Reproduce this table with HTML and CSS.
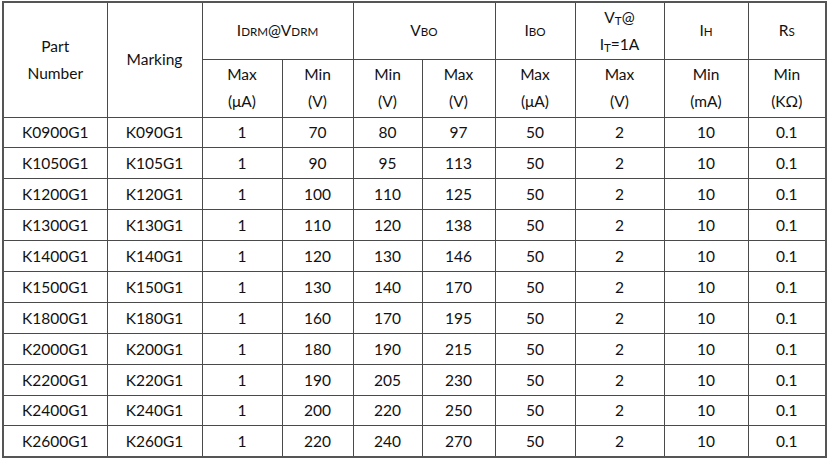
FILE: index.html
```html
<!DOCTYPE html>
<html>
<head>
<meta charset="utf-8">
<link rel="stylesheet" href="styles.css">
</head>
<body>
<table class="spec">
<colgroup>
<col class="c1"><col class="c2"><col class="c3"><col class="c4"><col class="c5"><col class="c6"><col class="c7"><col class="c8"><col class="c9"><col class="c10">
</colgroup>
<thead>
<tr class="h1">
<th rowspan="2">Part<br>Number</th>
<th rowspan="2">Marking</th>
<th colspan="2">I<sub>DRM</sub>@V<sub>DRM</sub></th>
<th colspan="2">V<sub>BO</sub></th>
<th>I<sub>BO</sub></th>
<th>V<sub class="lo">T</sub>@<br>I<sub class="lo">T</sub>=1A</th>
<th>I<sub>H</sub></th>
<th>R<sub>S</sub></th>
</tr>
<tr class="h2">
<th>Max<br>(μA)</th>
<th>Min<br>(V)</th>
<th>Min<br>(V)</th>
<th>Max<br>(V)</th>
<th>Max<br>(μA)</th>
<th>Max<br>(V)</th>
<th>Min<br>(mA)</th>
<th>Min<br>(KΩ)</th>
</tr>
</thead>
<tbody>
<tr><td>K0900G1</td><td>K090G1</td><td>1</td><td>70</td><td>80</td><td>97</td><td>50</td><td>2</td><td>10</td><td>0.1</td></tr>
<tr><td>K1050G1</td><td>K105G1</td><td>1</td><td>90</td><td>95</td><td>113</td><td>50</td><td>2</td><td>10</td><td>0.1</td></tr>
<tr><td>K1200G1</td><td>K120G1</td><td>1</td><td>100</td><td>110</td><td>125</td><td>50</td><td>2</td><td>10</td><td>0.1</td></tr>
<tr><td>K1300G1</td><td>K130G1</td><td>1</td><td>110</td><td>120</td><td>138</td><td>50</td><td>2</td><td>10</td><td>0.1</td></tr>
<tr><td>K1400G1</td><td>K140G1</td><td>1</td><td>120</td><td>130</td><td>146</td><td>50</td><td>2</td><td>10</td><td>0.1</td></tr>
<tr><td>K1500G1</td><td>K150G1</td><td>1</td><td>130</td><td>140</td><td>170</td><td>50</td><td>2</td><td>10</td><td>0.1</td></tr>
<tr><td>K1800G1</td><td>K180G1</td><td>1</td><td>160</td><td>170</td><td>195</td><td>50</td><td>2</td><td>10</td><td>0.1</td></tr>
<tr><td>K2000G1</td><td>K200G1</td><td>1</td><td>180</td><td>190</td><td>215</td><td>50</td><td>2</td><td>10</td><td>0.1</td></tr>
<tr><td>K2200G1</td><td>K220G1</td><td>1</td><td>190</td><td>205</td><td>230</td><td>50</td><td>2</td><td>10</td><td>0.1</td></tr>
<tr><td>K2400G1</td><td>K240G1</td><td>1</td><td>200</td><td>220</td><td>250</td><td>50</td><td>2</td><td>10</td><td>0.1</td></tr>
<tr><td>K2600G1</td><td>K260G1</td><td>1</td><td>220</td><td>240</td><td>270</td><td>50</td><td>2</td><td>10</td><td>0.1</td></tr>
</tbody>
</table>
</body>
</html>
```
FILE: styles.css
```css
html, body {
  margin: 0;
  padding: 0;
  background: #fff;
}
body {
  padding: 1px 0 0 2px;
}
.spec {
  border-collapse: collapse;
  table-layout: fixed;
  width: 825px;
  font-family: Lato, "Open Sans", "Liberation Sans", sans-serif;
  font-size: 15.5px;
  color: #111;
  border: 2px solid #555;
}
.spec th, .spec td {
  border: 1px solid #4a4a4a;
  padding: 0;
  text-align: center;
  vertical-align: middle;
  font-weight: normal;
  line-height: 27px;
}
.c1 { width: 104px; }
.c2 { width: 95px; }
.c3 { width: 80px; }
.c4 { width: 71px; }
.c5 { width: 69px; }
.c6 { width: 73px; }
.c7 { width: 80px; }
.c8 { width: 89px; }
.c9 { width: 84px; }
.c10 { width: 78px; }
.h1 { height: 57px; }
.h2 { height: 58px; }
tbody tr { height: 30.9px; }
.spec td { line-height: 20px; }
sub {
  font-size: 0.75em;
  vertical-align: baseline;
  position: relative;
  top: 0;
  line-height: 0;
}
sub.lo {
  top: 2px;
}
```
